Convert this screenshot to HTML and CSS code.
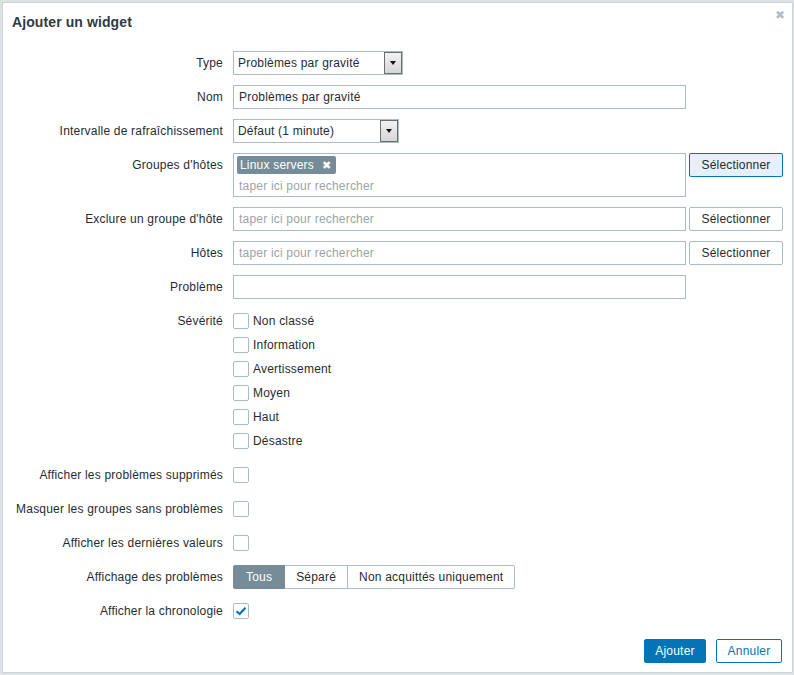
FILE: index.html
```html
<!DOCTYPE html>
<html lang="fr">
<head>
<meta charset="utf-8">
<title>Ajouter un widget</title>
<link rel="stylesheet" href="styles.css">
</head>
<body>
<div class="dialog">
  <div class="dlg-header">
    <h4 class="dlg-title">Ajouter un widget</h4>
    <span class="dlg-close">✖</span>
  </div>
  <div class="form">
    <label class="lbl">Type</label>
    <div class="ctl"><div class="select sel-type"><span class="sel-text">Problèmes par gravité</span><span class="sel-btn"><span class="sel-arrow"></span></span></div></div>

    <label class="lbl">Nom</label>
    <div class="ctl"><div class="input wide">Problèmes par gravité</div></div>

    <label class="lbl">Intervalle de rafraîchissement</label>
    <div class="ctl"><div class="select sel-int"><span class="sel-text">Défaut (1 minute)</span><span class="sel-btn"><span class="sel-arrow"></span></span></div></div>

    <label class="lbl">Groupes d'hôtes</label>
    <div class="ctl ms-row">
      <div class="multi wide">
        <span class="tag">Linux servers <span class="tag-x">✖</span></span>
        <span class="ph ph-line">taper ici pour rechercher</span>
      </div>
      <button class="btn-grey focused">Sélectionner</button>
    </div>

    <label class="lbl">Exclure un groupe d'hôte</label>
    <div class="ctl ms-row">
      <div class="input wide"><span class="ph">taper ici pour rechercher</span></div>
      <button class="btn-grey">Sélectionner</button>
    </div>

    <label class="lbl">Hôtes</label>
    <div class="ctl ms-row">
      <div class="input wide"><span class="ph">taper ici pour rechercher</span></div>
      <button class="btn-grey">Sélectionner</button>
    </div>

    <label class="lbl">Problème</label>
    <div class="ctl"><div class="input wide"></div></div>

    <label class="lbl">Sévérité</label>
    <div class="ctl checklist">
      <div class="chk-item"><span class="chk"></span>Non classé</div>
      <div class="chk-item"><span class="chk"></span>Information</div>
      <div class="chk-item"><span class="chk"></span>Avertissement</div>
      <div class="chk-item"><span class="chk"></span>Moyen</div>
      <div class="chk-item"><span class="chk"></span>Haut</div>
      <div class="chk-item"><span class="chk"></span>Désastre</div>
    </div>

    <label class="lbl">Afficher les problèmes supprimés</label>
    <div class="ctl chk-row"><span class="chk"></span></div>

    <label class="lbl">Masquer les groupes sans problèmes</label>
    <div class="ctl chk-row"><span class="chk"></span></div>

    <label class="lbl">Afficher les dernières valeurs</label>
    <div class="ctl chk-row"><span class="chk"></span></div>

    <label class="lbl">Affichage des problèmes</label>
    <div class="ctl">
      <div class="radio-seg">
        <span class="seg active">Tous</span><span class="seg">Séparé</span><span class="seg">Non acquittés uniquement</span>
      </div>
    </div>

    <label class="lbl">Afficher la chronologie</label>
    <div class="ctl chk-row"><span class="chk checked"><svg width="12" height="10" viewBox="0 0 12 10"><path d="M1.5 5.2 L4.6 8 L10.5 1.8" fill="none" stroke="#0275b8" stroke-width="2.2"/></svg></span></div>
  </div>
  <div class="dlg-footer">
    <button class="btn-main">Ajouter</button>
    <button class="btn-alt">Annuler</button>
  </div>
</div>
</body>
</html>
```

FILE: styles.css
```css
* { box-sizing: border-box; }
html, body { margin: 0; padding: 0; }
body {
  background: #dde2e5;
  font-family: "Liberation Sans", Arial, sans-serif;
  font-size: 12px;
  letter-spacing: 0.2px;
  color: #1f2c33;
  width: 794px;
  height: 675px;
  overflow: hidden;
}
.dialog {
  margin: 2px 0 0 2px;
  width: 791px;
  height: 671px;
  background: #fff;
  border: 1px solid #cdd4d8;
  display: flex;
  flex-direction: column;
}
.dlg-header {
  display: flex;
  justify-content: space-between;
  align-items: flex-start;
  padding: 10px 7px 10px 9px;
}
.dlg-title {
  margin: 0;
  font-size: 14px;
  line-height: 18px;
  font-weight: bold;
  letter-spacing: 0.1px;
  color: #2f3b44;
}
.dlg-close {
  color: #b3bec4;
  font-size: 12px;
  line-height: 12px;
  margin-top: -4px;
}
.form {
  flex: 1;
  display: grid;
  grid-template-columns: 210px 1fr;
  column-gap: 10px;
  row-gap: 10px;
  padding: 10px 10px 0 10px;
  align-content: start;
}
.lbl {
  text-align: right;
  line-height: 24px;
  white-space: nowrap;
}
.ctl { min-height: 24px; }
.input {
  height: 24px;
  border: 1px solid #acbbc2;
  padding: 0 5px;
  line-height: 22px;
  white-space: nowrap;
}
.wide { width: 453px; }
.ph { color: #9aa4aa; }
.select {
  height: 24px;
  border: 1px solid #acbbc2;
  display: flex;
  align-items: stretch;
  line-height: 22px;
}
.sel-type { width: 170px; }
.sel-int { width: 166px; }
.sel-text { flex: 1; padding-left: 4px; }
.sel-btn {
  width: 18px;
  border: 1px solid #6e6e6e;
  background: linear-gradient(#f2f2f2, #d6d6d6);
  display: flex;
  align-items: center;
  justify-content: center;
}
.sel-arrow {
  width: 0; height: 0;
  border-left: 3px solid transparent;
  border-right: 3px solid transparent;
  border-top: 4px solid #111;
}
.ms-row {
  display: flex;
  align-items: flex-start;
  gap: 3px;
}
.multi {
  height: 44px;
  border: 1px solid #acbbc2;
  padding: 2px 3px;
  display: flex;
  flex-direction: column;
  align-items: flex-start;
}
.tag {
  background: #768d99;
  color: #fff;
  height: 18px;
  line-height: 18px;
  padding: 0 5px 0 3px;
  border-radius: 2px;
  white-space: nowrap;
}
.tag-x {
  font-size: 11px;
  margin-left: 4px;
}
.ph-line {
  line-height: 21px;
  padding-left: 2px;
  margin-top: 2px;
}
button {
  font-family: "Liberation Sans", Arial, sans-serif;
  font-size: 12px;
  letter-spacing: 0.2px;
  height: 24px;
  border-radius: 2px;
  cursor: pointer;
}
.btn-grey {
  width: 94px;
  background: #fff;
  border: 1px solid #acbbc2;
  color: #1f2c33;
  padding: 0;
}
.btn-grey.focused {
  background: #e5f0fa;
  border-color: #0275b8;
}
.checklist { display: flex; flex-direction: column; }
.chk-item {
  height: 24px;
  display: flex;
  align-items: center;
  gap: 4px;
  white-space: nowrap;
}
.chk {
  display: inline-flex;
  align-items: center;
  justify-content: center;
  width: 16px;
  height: 16px;
  border: 1px solid #acbbc2;
  border-radius: 2px;
  background: #fff;
  flex: none;
}
.chk-row {
  height: 24px;
  display: flex;
  align-items: center;
}
.radio-seg { display: flex; }
.seg {
  height: 24px;
  line-height: 22px;
  border: 1px solid #acbbc2;
  padding: 0 11px;
  white-space: nowrap;
  margin-left: -1px;
}
.seg:first-child { margin-left: 0; border-radius: 2px 0 0 2px; padding: 0 12px; }
.seg:last-child { border-radius: 0 2px 2px 0; }
.seg.active {
  background: #768d99;
  border-color: #768d99;
  color: #fff;
  position: relative;
}
.dlg-footer {
  display: flex;
  justify-content: flex-end;
  gap: 10px;
  padding: 0 10px 9px 0;
}
.btn-main {
  width: 62px;
  background: #0275b8;
  border: 1px solid #0275b8;
  color: #fff;
}
.btn-alt {
  width: 66px;
  background: #fff;
  border: 1px solid #0275b8;
  color: #0275b8;
}
```
